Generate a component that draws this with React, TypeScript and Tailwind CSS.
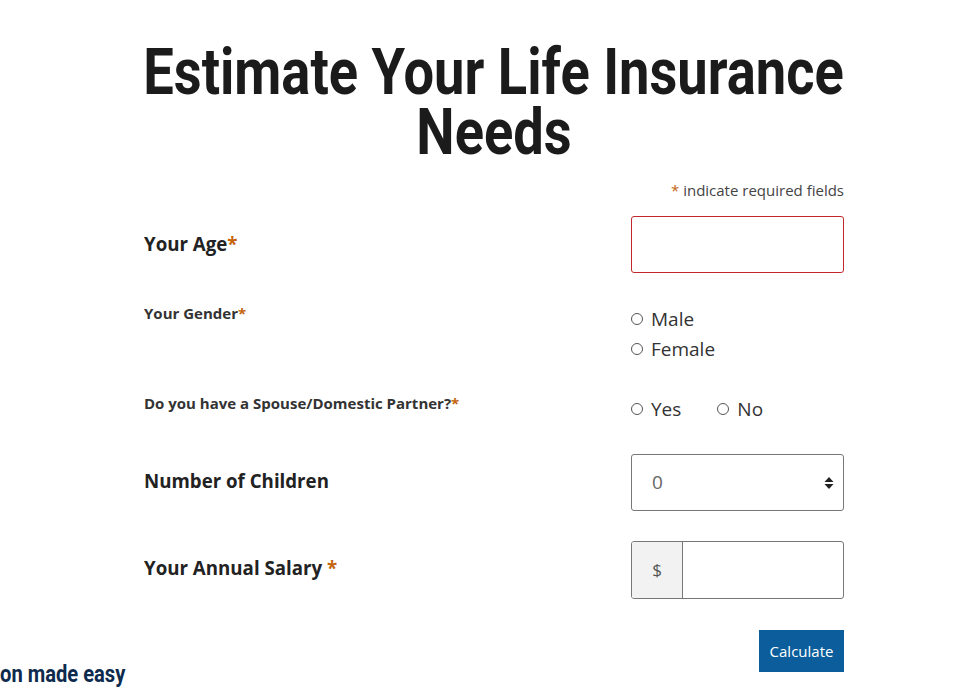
const req = "text-[#c4650e]";

function Radio({ label }: { label: string }) {
  return (
    <label className="flex items-center gap-[8px] text-[19px] leading-[30px] text-[#333]">
      <span className="block size-[12px] rounded-full border border-[#555] bg-white" />
      {label}
    </label>
  );
}

export default function App() {
  return (
    <div className="relative h-[690px] w-[977px] overflow-hidden bg-white font-['Open_Sans',sans-serif]">
      <div className="ml-[144px] w-[700px] pt-[42px]">
        <h1 className="flex flex-col items-center font-['Roboto',sans-serif] text-[65px] font-bold leading-[60px] text-[#1b1b1b]">
          <span className="inline-block origin-center scale-x-[0.835] whitespace-nowrap">
            Estimate Your Life Insurance
          </span>
          <span className="inline-block origin-center scale-x-[0.835] whitespace-nowrap">Needs</span>
        </h1>
        <p className="mt-[18px] text-right text-[15px] leading-[20px] text-[#444]">
          <span className={req}>*</span> indicate required fields
        </p>

        <div className="mt-[16px] flex items-center justify-between">
          <div className="text-[18.7px] font-bold text-[#222]">
            Your Age<span className={req}>*</span>
          </div>
          <input className="h-[57px] w-[213px] rounded-[3px] border border-[#c1272d] px-3 outline-none" />
        </div>

        <div className="mt-[26px] flex justify-between">
          <div className="text-[15px] font-bold leading-[28px] text-[#333]">
            Your Gender<span className={req}>*</span>
          </div>
          <div className="w-[213px] pt-[5px]">
            <Radio label="Male" />
            <Radio label="Female" />
          </div>
        </div>

        <div className="mt-[25px] flex justify-between">
          <div className="text-[15px] font-bold leading-[28px] text-[#333]">
            Do you have a Spouse/Domestic Partner?<span className={req}>*</span>
          </div>
          <div className="flex w-[213px] gap-[36px] pt-[5px]">
            <Radio label="Yes" />
            <Radio label="No" />
          </div>
        </div>

        <div className="mt-[30px] flex items-center justify-between">
          <div className="pb-[2px] text-[18.7px] font-bold text-[#222]">Number of Children</div>
          <div className="flex h-[57px] w-[213px] items-center justify-between rounded-[3px] border border-[#777] pl-[20px] pr-[9px] text-[19px] text-[#666]">
            <span>0</span>
            <svg width="10" height="14" viewBox="0 0 10 14">
              <path d="M5 1 L9.5 6 H0.5 Z" fill="#222" />
              <path d="M5 13 L9.5 8 H0.5 Z" fill="#222" />
            </svg>
          </div>
        </div>

        <div className="mt-[30px] flex items-center justify-between">
          <div className="pb-[3px] text-[18.7px] font-bold text-[#222]">
            Your Annual Salary <span className={req}>*</span>
          </div>
          <div className="flex h-[58px] w-[213px] overflow-hidden rounded-[3px] border border-[#777]">
            <div className="flex w-[51px] items-center justify-center border-r border-[#777] bg-[#f2f2f2] text-[17px] text-[#555]">
              $
            </div>
            <input className="min-w-0 flex-1 px-3 outline-none" />
          </div>
        </div>

        <div className="mt-[31px] flex justify-end">
          <button className="h-[42px] w-[85px] bg-[#0b5e9b] text-[15px] text-white">Calculate</button>
        </div>
      </div>
      <div className="absolute bottom-[2px] left-0 origin-left scale-x-[0.84] font-['Roboto',sans-serif] text-[24px] font-bold leading-[28px] text-[#0e2a4d]">
        on made easy
      </div>
    </div>
  );
}
